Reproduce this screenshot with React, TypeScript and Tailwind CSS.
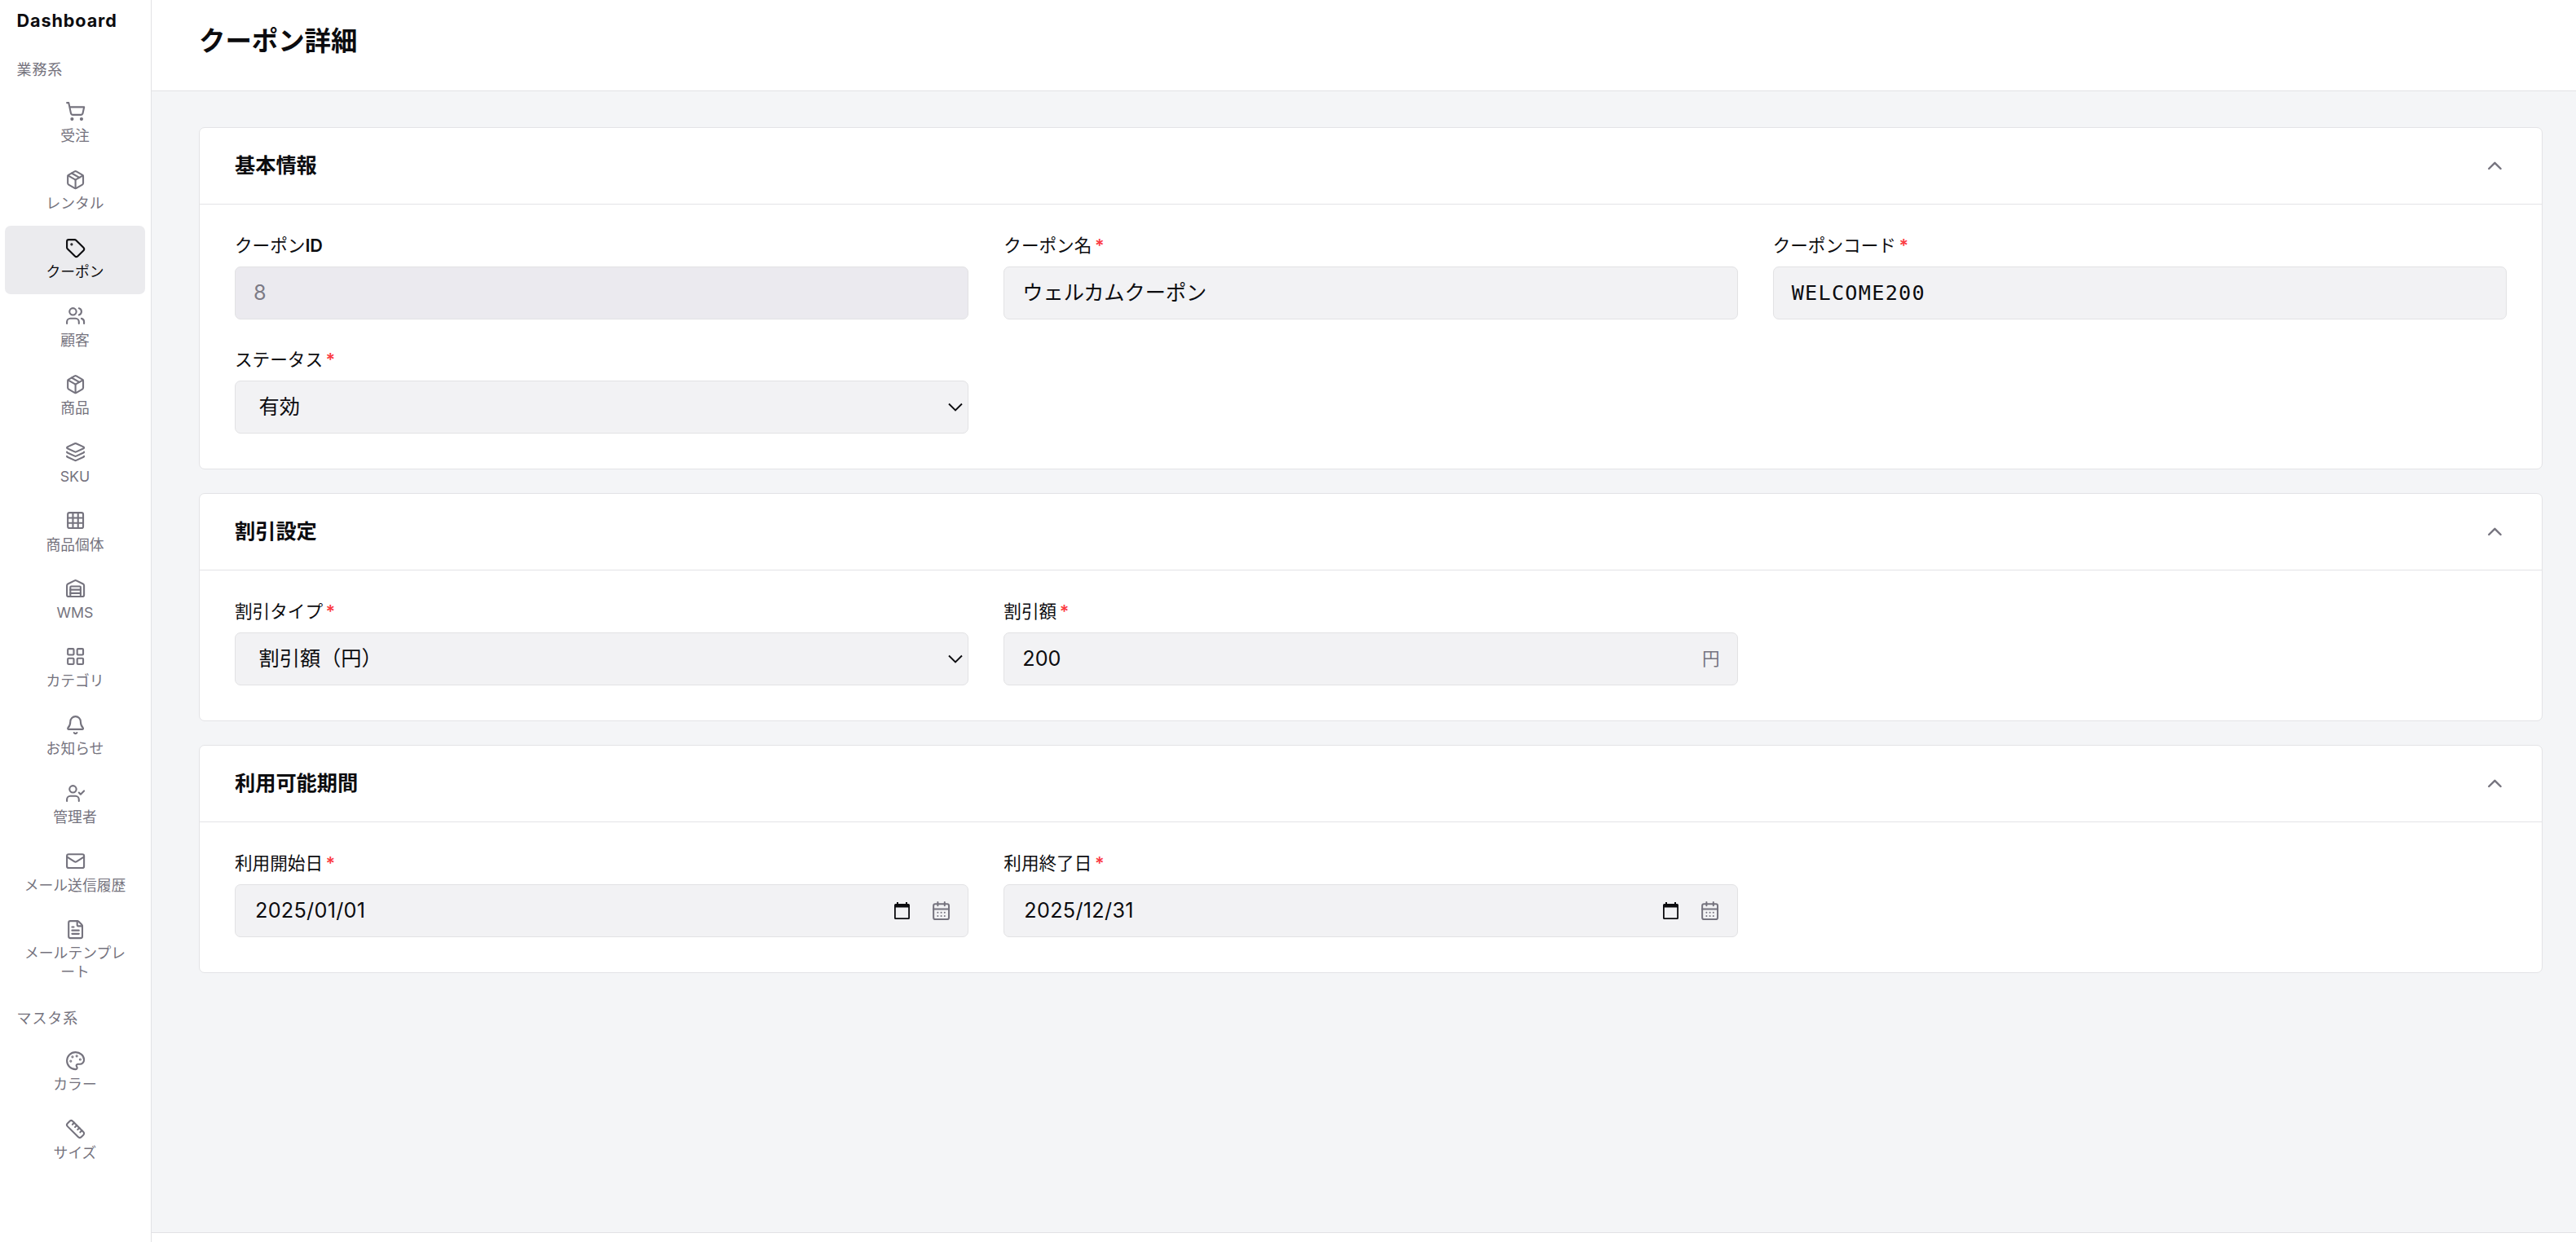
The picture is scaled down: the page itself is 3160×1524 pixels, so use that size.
import type { ReactNode } from 'react';
import {
  Bell,
  CalendarDays,
  ChevronUp,
  FileText,
  Grid3x3,
  Layers,
  LayoutGrid,
  Mail,
  Package,
  Palette,
  Ruler,
  ShoppingCart,
  Tag,
  UserCheck,
  Users,
  Warehouse,
  type LucideIcon,
} from 'lucide-react';

type Item = { icon: LucideIcon; lines: string[]; active?: boolean };

const business: Item[] = [
  { icon: ShoppingCart, lines: ['受注'] },
  { icon: Package, lines: ['レンタル'] },
  { icon: Tag, lines: ['クーポン'], active: true },
  { icon: Users, lines: ['顧客'] },
  { icon: Package, lines: ['商品'] },
  { icon: Layers, lines: ['SKU'] },
  { icon: Grid3x3, lines: ['商品個体'] },
  { icon: Warehouse, lines: ['WMS'] },
  { icon: LayoutGrid, lines: ['カテゴリ'] },
  { icon: Bell, lines: ['お知らせ'] },
  { icon: UserCheck, lines: ['管理者'] },
  { icon: Mail, lines: ['メール送信履歴'] },
  { icon: FileText, lines: ['メールテンプレ', 'ート'] },
];

const master: Item[] = [
  { icon: Palette, lines: ['カラー'] },
  { icon: Ruler, lines: ['サイズ'] },
];

function NavItem({ icon: Icon, lines, active }: Item) {
  return (
    <a
      className={
        active
          ? 'flex flex-col items-center gap-[6.2px] rounded-[7px] bg-[#ebebee] pt-[14.4px] pb-[15.4px] text-[#0c0c0f]'
          : 'flex flex-col items-center gap-[6.2px] rounded-[7px] pt-[14.4px] pb-[15.4px] text-[#75737e]'
      }
    >
      <Icon size={25.2} strokeWidth={2} className="ml-[2px]" />
      <span className="text-center text-[17.8px] leading-[22.5px]">
        {lines.map((line) => (
          <span key={line} className="block whitespace-nowrap">
            {line}
          </span>
        ))}
      </span>
    </a>
  );
}

function GroupLabel({ children }: { children: ReactNode }) {
  return <div className="pl-[14.5px] text-[18px] leading-[26px] tracking-[0.9px] text-[#75737e]">{children}</div>;
}

function Card({ title, children }: { title: string; children: ReactNode }) {
  return (
    <section className="rounded-[7px] border border-[#e3e3e6] bg-white">
      <div className="flex h-[94px] items-center justify-between border-b border-[#e3e3e6] px-[43px]">
        <h2 className="pb-[2px] text-[25.2px] leading-9 font-bold">{title}</h2>
        <ChevronUp size={28.8} strokeWidth={2} className="text-[#75737e]" />
      </div>
      <div className="grid grid-cols-3 gap-x-[43px] gap-y-[34px] px-[43px] pt-[35px] pb-[43px]">{children}</div>
    </section>
  );
}

function Field({ label, required, children }: { label: ReactNode; required?: boolean; children: ReactNode }) {
  return (
    <div>
      <div className="mb-[11px] flex h-[30px] items-center text-[21.6px] leading-[30px]">
        <span>{label}</span>
        {required && <span className="ml-[3.6px] font-semibold text-[#fb3b43]">*</span>}
      </div>
      {children}
    </div>
  );
}

const box = 'flex h-[65px] items-center rounded-[7px] border border-[#e2e2e4] bg-[#f2f2f4] text-[25.2px]';

function SelectBox({ value }: { value: string }) {
  return (
    <div className={`${box} justify-between pr-[5px] pl-[28.5px]`}>
      <span>{value}</span>
      <svg width="20" height="14" viewBox="0 0 20 14" fill="none" stroke="#0c0c0f" strokeWidth="1.9">
        <path d="M2 2.5l8 8 8-8" />
      </svg>
    </div>
  );
}

function DateBox({ value }: { value: string }) {
  return (
    <div className={`${box} pr-[20px] pl-[24px]`}>
      <span className="flex-1 tracking-[0.3px]">{value}</span>
      <svg width="19" height="21" viewBox="0 0 19 21" fill="#0c0c0f" className="mr-[26px]">
        <path
          fillRule="evenodd"
          d="M3 0h2v2h9V0h2v2h1.4A1.6 1.6 0 0 1 19 3.6v15.8a1.6 1.6 0 0 1-1.6 1.6H1.6A1.6 1.6 0 0 1 0 19.4V3.6A1.6 1.6 0 0 1 1.6 2H3zM1.8 6.6v12.6h15.4V6.6z"
        />
      </svg>
      <CalendarDays size={25.2} strokeWidth={1.9} className="text-[#75737e]" />
    </div>
  );
}

export default function App() {
  return (
    <div className="flex h-[1524px] w-[3160px] overflow-hidden bg-[#f4f5f7] font-['Inter','Noto_Sans_CJK_JP',sans-serif] text-[#0c0c0f]">
      <aside className="w-[186px] shrink-0 border-r border-[#e2e2e5] bg-white pr-[7px] pl-[6px]">
        <div className="flex h-[51px] items-center pl-[14.5px] text-[21.6px] font-bold tracking-[0.9px]">Dashboard</div>
        <div className="pt-[21.5px] pb-[11.3px]">
          <GroupLabel>業務系</GroupLabel>
        </div>
        <nav>
          {business.map((item) => (
            <NavItem key={item.lines[0]} {...item} />
          ))}
        </nav>
        <div className="pt-[17px] pb-[11.8px]">
          <GroupLabel>マスタ系</GroupLabel>
        </div>
        <nav>
          {master.map((item) => (
            <NavItem key={item.lines[0]} {...item} />
          ))}
        </nav>
      </aside>
      <div className="flex min-w-0 flex-1 flex-col">
        <header className="h-[112px] border-b border-[#e2e2e5] bg-white pt-[28px] pl-[58px]">
          <h1 className="text-[32.4px] leading-[46px] font-bold">クーポン詳細</h1>
        </header>
        <main className="flex flex-1 flex-col gap-[29px] pt-[44px] pr-[41px] pl-[58px]">
          <Card title="基本情報">
            <Field label={<>クーポン<span className="font-semibold">ID</span></>}>
              <div className="flex h-[65px] items-center rounded-[7px] border border-[#e2e2e4] bg-[#ebeaef] pl-[22px] text-[25.2px] text-[#7c7a85]">
                8
              </div>
            </Field>
            <Field label="クーポン名" required>
              <div className={`${box} pl-[22px]`}>ウェルカムクーポン</div>
            </Field>
            <Field label="クーポンコード" required>
              <div className={`${box} pl-[22px] font-['DejaVu_Sans_Mono',monospace] tracking-[1.26px]`}>WELCOME200</div>
            </Field>
            <Field label="ステータス" required>
              <SelectBox value="有効" />
            </Field>
          </Card>
          <Card title="割引設定">
            <Field label="割引タイプ" required>
              <SelectBox value="割引額（円）" />
            </Field>
            <Field label="割引額" required>
              <div className={`${box} justify-between pr-[21px] pl-[22px]`}>
                <span>200</span>
                <span className="text-[21.6px] text-[#75737e]">円</span>
              </div>
            </Field>
          </Card>
          <Card title="利用可能期間">
            <Field label="利用開始日" required>
              <DateBox value="2025/01/01" />
            </Field>
            <Field label="利用終了日" required>
              <DateBox value="2025/12/31" />
            </Field>
          </Card>
        </main>
        <footer className="h-[12px] border-t border-[#e2e2e5] bg-white" />
      </div>
    </div>
  );
}
